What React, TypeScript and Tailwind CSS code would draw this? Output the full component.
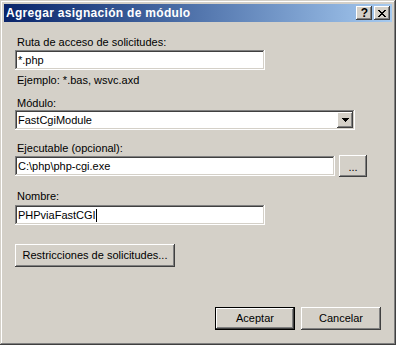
import React from 'react';

const raised =
    'shadow-[inset_-1px_-1px_#404040,inset_1px_1px_#ffffff,inset_-2px_-2px_#808080,inset_2px_2px_#d4d0c8]';
const sunken =
    'shadow-[inset_-1px_-1px_#ffffff,inset_1px_1px_#808080,inset_-2px_-2px_#d4d0c8,inset_2px_2px_#404040]';

const CloseGlyph = () => (
    <svg width="8" height="7" viewBox="0 0 8 7" shapeRendering="crispEdges">
        {[
            [0, 0], [1, 0], [6, 0], [7, 0],
            [1, 1], [2, 1], [5, 1], [6, 1],
            [2, 2], [3, 2], [4, 2], [5, 2],
            [3, 3], [4, 3],
            [2, 4], [3, 4], [4, 4], [5, 4],
            [1, 5], [2, 5], [5, 5], [6, 5],
            [0, 6], [1, 6], [6, 6], [7, 6],
        ].map(([x, y]) => (
            <rect key={`${x}-${y}`} x={x} y={y} width="1" height="1" fill="#000" />
        ))}
    </svg>
);

const TextBox: React.FC<{ width: string; children?: React.ReactNode }> = ({ width, children }) => (
    <div className={`${width} h-[20px] bg-white ${sunken} flex items-center pl-[3px] pr-[2px] text-black`}>
        {children}
    </div>
);

const Label: React.FC<{ className?: string; children: React.ReactNode }> = ({ className = '', children }) => (
    <div className={`h-[13px] leading-[13px] text-black ${className}`}>{children}</div>
);

export default function App() {
    return (
        <div
            className="w-[396px] h-[345px] bg-[#d4d0c8] p-[4px] flex flex-col text-[11px] shadow-[inset_-1px_-1px_#404040,inset_1px_1px_#d4d0c8,inset_-2px_-2px_#808080,inset_2px_2px_#ffffff]"
            style={{ fontFamily: '"Liberation Sans", Arial, sans-serif' }}
        >
            {/* title bar */}
            <div className="h-[18px] flex items-center bg-gradient-to-r from-[#0a246a] to-[#a6caf0] pl-[2px] pr-[2px]">
                <span className="text-white font-bold text-[12px] leading-[14px] tracking-[0.3px]">Agregar asignación de módulo</span>
                <div className="ml-auto flex gap-[2px]">
                    <div className={`w-[16px] h-[14px] bg-[#d4d0c8] ${raised} flex items-center justify-center`}>
                        <span className="font-bold text-[12px] leading-[12px] text-black pl-[1px]">?</span>
                    </div>
                    <div className={`w-[16px] h-[14px] bg-[#d4d0c8] ${raised} flex items-center justify-center`}>
                        <CloseGlyph />
                    </div>
                </div>
            </div>

            <div className="flex-1 flex flex-col px-[11px] pb-[11px]">
                <Label className="mt-[14px] pl-[2px]">Ruta de acceso de solicitudes:</Label>
                <div className="mt-[1px]">
                    <TextBox width="w-[250px]">*.php</TextBox>
                </div>
                <Label className="mt-[4px] pl-[2px]">Ejemplo: *.bas, wsvc.axd</Label>

                <Label className="mt-[10px] pl-[2px]">Módulo:</Label>
                <div className={`w-[340px] h-[20px] bg-white ${sunken} flex items-center p-[2px]`}>
                    <span className="flex-1 pl-[1px] text-black">FastCgiModule</span>
                    <div className={`w-[16px] h-[16px] bg-[#d4d0c8] ${raised} flex items-center justify-center`}>
                        <svg width="7" height="4" viewBox="0 0 7 4" shapeRendering="crispEdges">
                            <path d="M0 0h7v1h-1v1h-1v1h-1v1h-1v-1h-1v-1h-1v-1h-1z" fill="#000" />
                        </svg>
                    </div>
                </div>

                <Label className="mt-[12px] pl-[2px]">Ejecutable (opcional):</Label>
                <div className="flex items-center gap-[4px]">
                    <TextBox width="w-[320px]">C:\php\php-cgi.exe</TextBox>
                    <div className={`w-[28px] h-[22px] bg-[#d4d0c8] ${raised} flex items-center justify-center text-black pt-[2px]`}>
                        ...
                    </div>
                </div>

                <Label className="mt-[13px] pl-[2px]">Nombre:</Label>
                <div className="mt-[2px]">
                    <TextBox width="w-[250px]">
                        <span>PHPviaFastCGI</span>
                        <span className="w-[1px] h-[13px] bg-black" />
                    </TextBox>
                </div>

                <div
                    className={`mt-[19px] w-[160px] h-[23px] bg-[#d4d0c8] ${raised} flex items-center justify-center text-black`}
                >
                    Restricciones de solicitudes...
                </div>

                <div className="mt-auto flex justify-end gap-[6px]">
                    <div className="w-[80px] h-[23px] bg-[#d4d0c8] shadow-[inset_0_0_0_1px_#000000,inset_-2px_-2px_#404040,inset_2px_2px_#ffffff,inset_-3px_-3px_#808080,inset_3px_3px_#d4d0c8] flex items-center justify-center text-black">
                        Aceptar
                    </div>
                    <div className={`w-[80px] h-[23px] bg-[#d4d0c8] ${raised} flex items-center justify-center text-black`}>
                        Cancelar
                    </div>
                </div>
            </div>
        </div>
    );
}
